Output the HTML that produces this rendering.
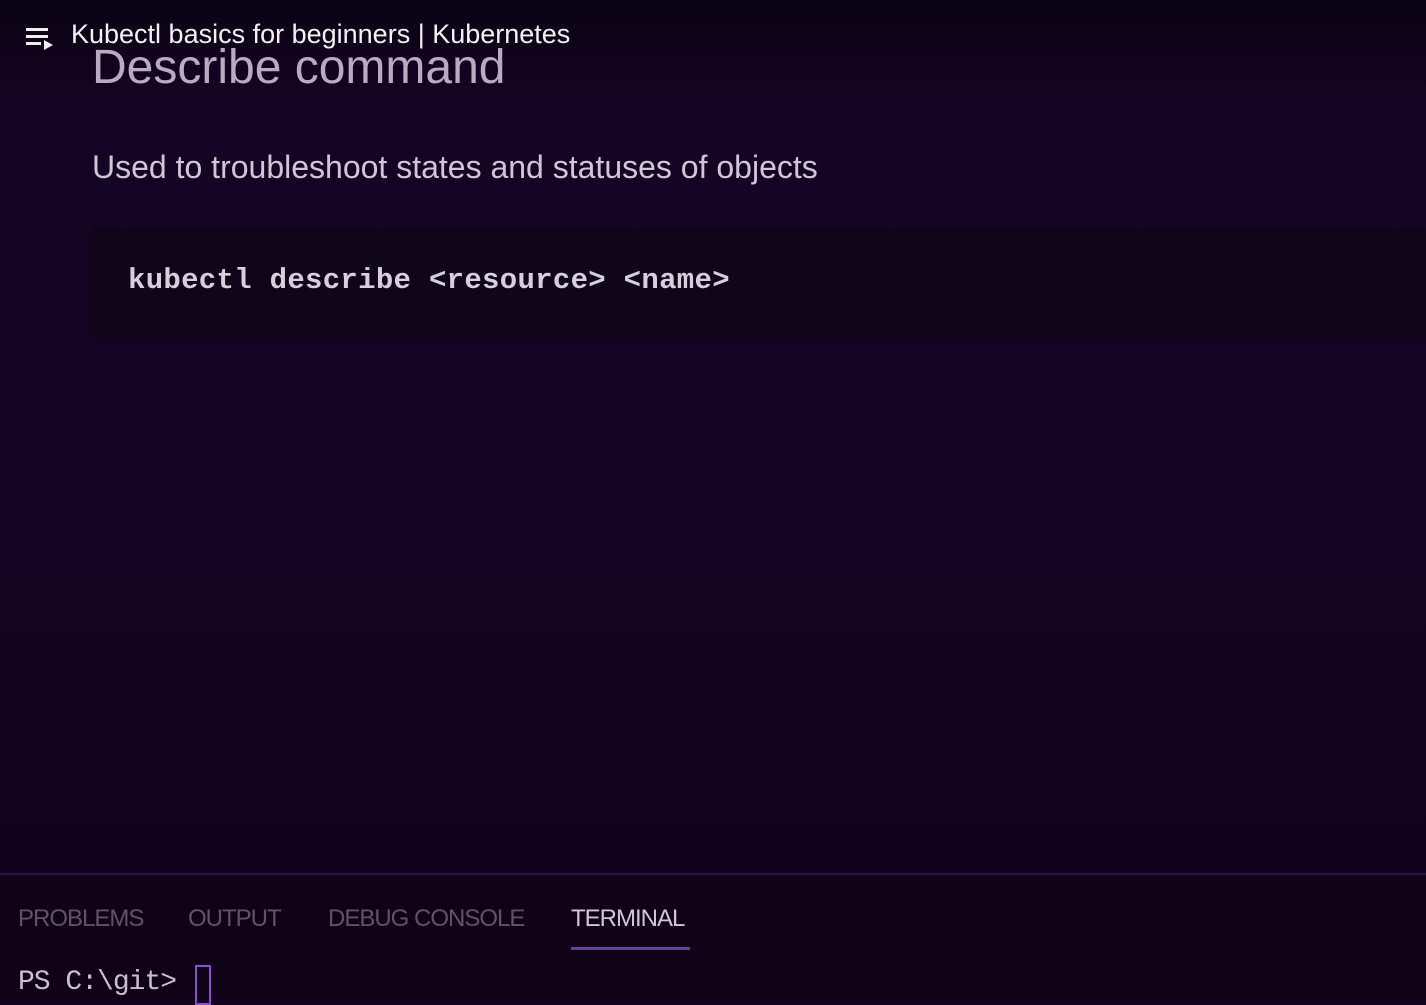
<!DOCTYPE html>
<html><head><style>
html,body{margin:0;padding:0;width:1426px;height:997px;overflow:hidden;background:#12041f;font-family:"Liberation Sans",sans-serif}
.main{position:absolute;left:0;top:0;width:1426px;height:873px;background:linear-gradient(#090312 0,#150525 100px,#140424 500px,#10041c 873px)}
.t{position:absolute;color:#c8c0d0;white-space:nowrap}
.code{position:absolute;left:92px;top:228px;width:1334px;height:110px;background:#10061a}
.bottom{position:absolute;left:0;top:873px;width:1426px;height:124px;background:#0f0318;border-top:2px solid #2a1245}
.tab{position:absolute;top:30px;font-size:24px;color:#5e5468;letter-spacing:-1px;font-family:"Liberation Sans Narrow","Liberation Sans",sans-serif}
</style></head><body>
<div class="main"></div>
<div class="t" style="left:92px;top:40px;font-size:48px;color:#b8acc2;letter-spacing:0px">Describe command</div>
<div class="t" style="left:92px;top:149px;font-size:32px;color:#cfc6d6;letter-spacing:0px">Used to troubleshoot states and statuses of objects</div>
<div class="code"></div>
<div class="t" style="left:128px;top:264px;font-size:29px;font-family:'Liberation Mono',monospace;font-weight:bold;color:#d6cfdc;letter-spacing:0.3px">kubectl describe &lt;resource&gt; &lt;name&gt;</div>
<div class="bottom">
<div class="tab" style="left:18px">PROBLEMS</div>
<div class="tab" style="left:188px">OUTPUT</div>
<div class="tab" style="left:328px">DEBUG CONSOLE</div>
<div class="tab" style="left:571px;color:#cfc6d6">TERMINAL</div>
<div style="position:absolute;left:571px;top:72px;width:119px;height:3px;background:#6a3c9a"></div>
<div class="t" style="left:18px;top:92px;font-size:28px;font-family:'Liberation Mono',monospace;color:#c8c0d0;letter-spacing:-1px">PS C:\git&gt;</div>
<div style="position:absolute;left:195px;top:90px;width:16px;height:40px;border:2px solid #8a4fd0;box-sizing:border-box"></div>
</div>
<svg style="position:absolute;left:26px;top:26px" width="28" height="26" viewBox="0 0 28 26">
<rect x="0" y="2" width="22" height="3" fill="#eee"/><rect x="0" y="9" width="22" height="3" fill="#eee"/><rect x="0" y="16" width="15" height="3" fill="#eee"/><path d="M18 14 L27 19 L18 24Z" fill="#eee"/></svg>
<div class="t" style="left:71px;top:19px;font-size:27px;color:#f2f2f2">Kubectl basics for beginners | Kubernetes</div>
</body></html>
